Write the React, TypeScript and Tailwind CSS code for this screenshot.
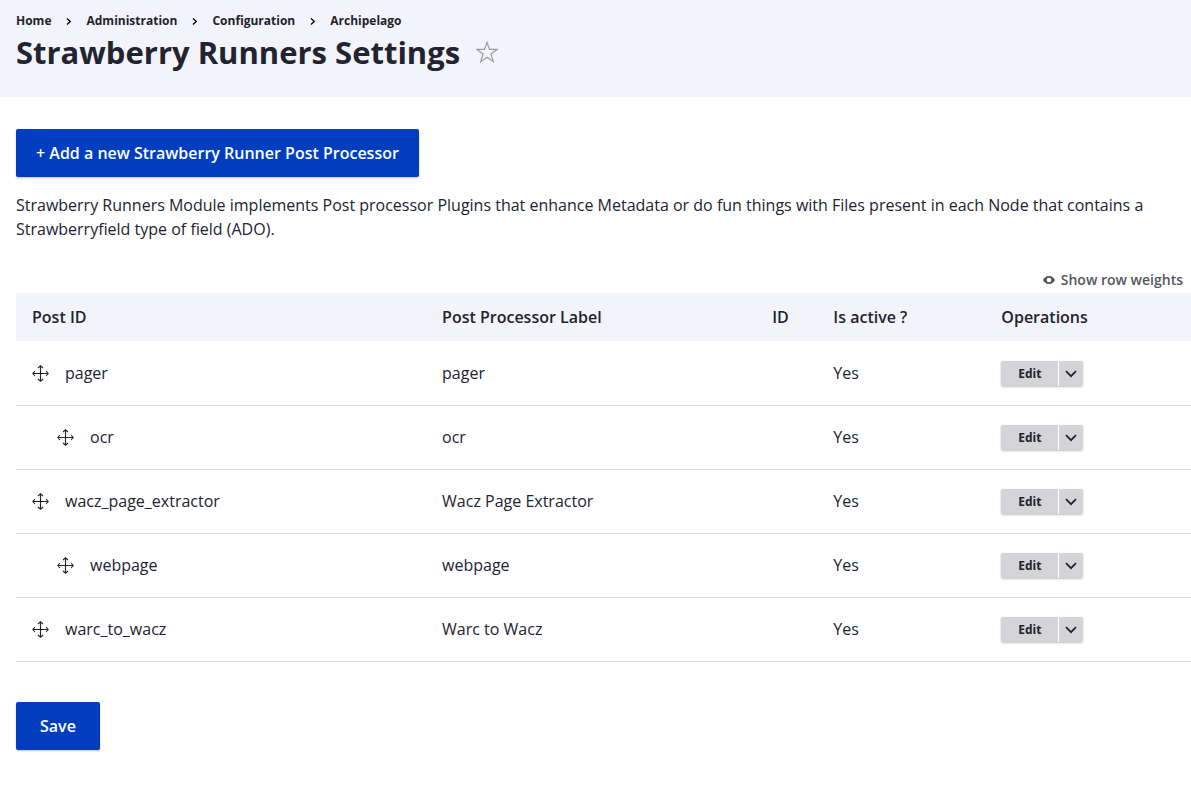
import React from "react";

type Processor = { id: string; label: string; depth: number };

const processors: Processor[] = [
  { id: "pager", label: "pager", depth: 0 },
  { id: "ocr", label: "ocr", depth: 1 },
  { id: "wacz_page_extractor", label: "Wacz Page Extractor", depth: 0 },
  { id: "webpage", label: "webpage", depth: 1 },
  { id: "warc_to_wacz", label: "Warc to Wacz", depth: 0 },
];

const crumbs = ["Home", "Administration", "Configuration", "Archipelago"];

function MoveIcon() {
  return (
    <svg width="17" height="17" viewBox="0 0 17 17" fill="none" stroke="#222330" strokeWidth="1.1" aria-hidden="true">
      <path d="M8.5 1v15M1 8.5h15" />
      <path d="M6 3 8.5.8 11 3M6 14l2.500 2.200L11 14M3 6 .8 8.500 3 11M14 6l2.200 2.500L14 11" />
    </svg>
  );
}

function StarIcon() {
  return (
    <svg width="22" height="22" viewBox="0 0 22 22" fill="none" stroke="#9a9ba3" strokeWidth="1.2" aria-hidden="true">
      <path d="M11 1.400 13.500 8.400H21L15 12.900 17.300 20.700 11 16.200 4.700 20.700 7 12.900 1 8.400H8.500Z" />
    </svg>
  );
}

function EyeIcon() {
  return (
    <svg width="12" height="8" viewBox="0 0 12 8" aria-hidden="true">
      <path
        fill="#55565b"
        fillRule="evenodd"
        d="M6 0C3 0 1 1.800 0 4c1 2.200 3 4 6 4s5-1.800 6-4C11 1.800 9 0 6 0ZM6 1.700a2.300 2.300 0 1 1 0 4.600 2.300 2.300 0 0 1 0-4.600Z"
      />
    </svg>
  );
}

export default function App() {
  return (
    <div className="bg-white font-['Open_Sans',sans-serif] text-base leading-6 text-[#222330]">
      <header className="bg-[#f3f4f9] px-4 pt-[13px] pb-[22px]">
        <nav aria-label="Breadcrumb">
          <ol className="flex items-center text-xs leading-4 font-bold">
            {crumbs.map((crumb, i) => (
              <li key={crumb} className="flex items-center">
                {i > 0 && (
                  <svg className="mx-4 overflow-visible" width="3" height="7" viewBox="0 0 3 7" fill="none" stroke="#000" strokeWidth="1.3" aria-hidden="true">
                    <path d="M0 .5 3.300 3.500 0 6.500" />
                  </svg>
                )}
                <a href="#">{crumb}</a>
              </li>
            ))}
          </ol>
        </nav>
        <div className="flex items-center gap-4">
          <h1 className="text-[31px] leading-[46px] font-bold">Strawberry Runners Settings</h1>
          <button type="button" aria-label="Add to shortcuts">
            <StarIcon />
          </button>
        </div>
      </header>

      <main className="pt-8 pb-12 pl-4">
        <a
          href="#"
          className="inline-flex h-12 items-center rounded-xs bg-[#003ebf] px-5 font-semibold text-white shadow-[0_1px_2px_rgba(0,0,0,0.25)]"
        >
          + Add a new Strawberry Runner Post Processor
        </a>
        <p className="mt-4 pr-4">
          Strawberry Runners Module implements Post processor Plugins that enhance Metadata or do fun things with Files
          present in each Node that contains a Strawberryfield type of field (ADO).
        </p>

        <form onSubmit={(e) => e.preventDefault()}>
          <div className="mt-[27px] mb-px flex justify-end pr-2">
            <button type="button" className="flex items-center gap-1.5 text-sm leading-6 font-semibold text-[#55565b]">
              <EyeIcon />
              Show row weights
            </button>
          </div>

          <table className="w-full table-fixed border-collapse text-left">
            <colgroup>
              <col className="w-[34.9%]" />
              <col className="w-[28.1%]" />
              <col className="w-[5.2%]" />
              <col className="w-[14.3%]" />
              <col />
            </colgroup>
            <thead>
              <tr className="h-12 border-b border-white bg-[#f3f4f9]">
                {["Post ID", "Post Processor Label", "ID", "Is active ?", "Operations"].map((title) => (
                  <th key={title} scope="col" className="px-4 font-semibold">
                    {title}
                  </th>
                ))}
              </tr>
            </thead>
            <tbody>
              {processors.map((p) => (
                <tr key={p.id} className="h-16 border-b border-[#d3d4d9]">
                  <td className="px-4">
                    <div className={p.depth ? "flex items-center gap-4 pl-[25px]" : "flex items-center gap-4"}>
                      <button type="button" aria-label={`Move ${p.id}`} className="cursor-move">
                        <MoveIcon />
                      </button>
                      {p.id}
                    </div>
                  </td>
                  <td className="px-4">{p.label}</td>
                  <td className="px-4" />
                  <td className="px-4">Yes</td>
                  <td className="px-4">
                    <div className="mt-px flex h-[25px] w-[82px] gap-px rounded-xs shadow-[0_1px_2px_rgba(0,0,0,0.25)]">
                      <button type="button" className="flex-1 rounded-l-xs bg-[#d4d4d8] text-xs leading-6 font-bold">
                        Edit
                      </button>
                      <button
                        type="button"
                        aria-label={`More actions for ${p.id}`}
                        className="flex w-6 items-center justify-center rounded-r-xs bg-[#d4d4d8]"
                      >
                        <svg width="12" height="8" viewBox="0 0 12 8" fill="none" stroke="#222330" strokeWidth="1.8" aria-hidden="true">
                          <path d="M1 1.200 6 6.200 11 1.200" />
                        </svg>
                      </button>
                    </div>
                  </td>
                </tr>
              ))}
            </tbody>
          </table>

          <button
            type="submit"
            className="mt-10 h-12 rounded-xs bg-[#003ebf] px-6 font-semibold text-white shadow-[0_1px_2px_rgba(0,0,0,0.25)]"
          >
            Save
          </button>
        </form>
      </main>
    </div>
  );
}
